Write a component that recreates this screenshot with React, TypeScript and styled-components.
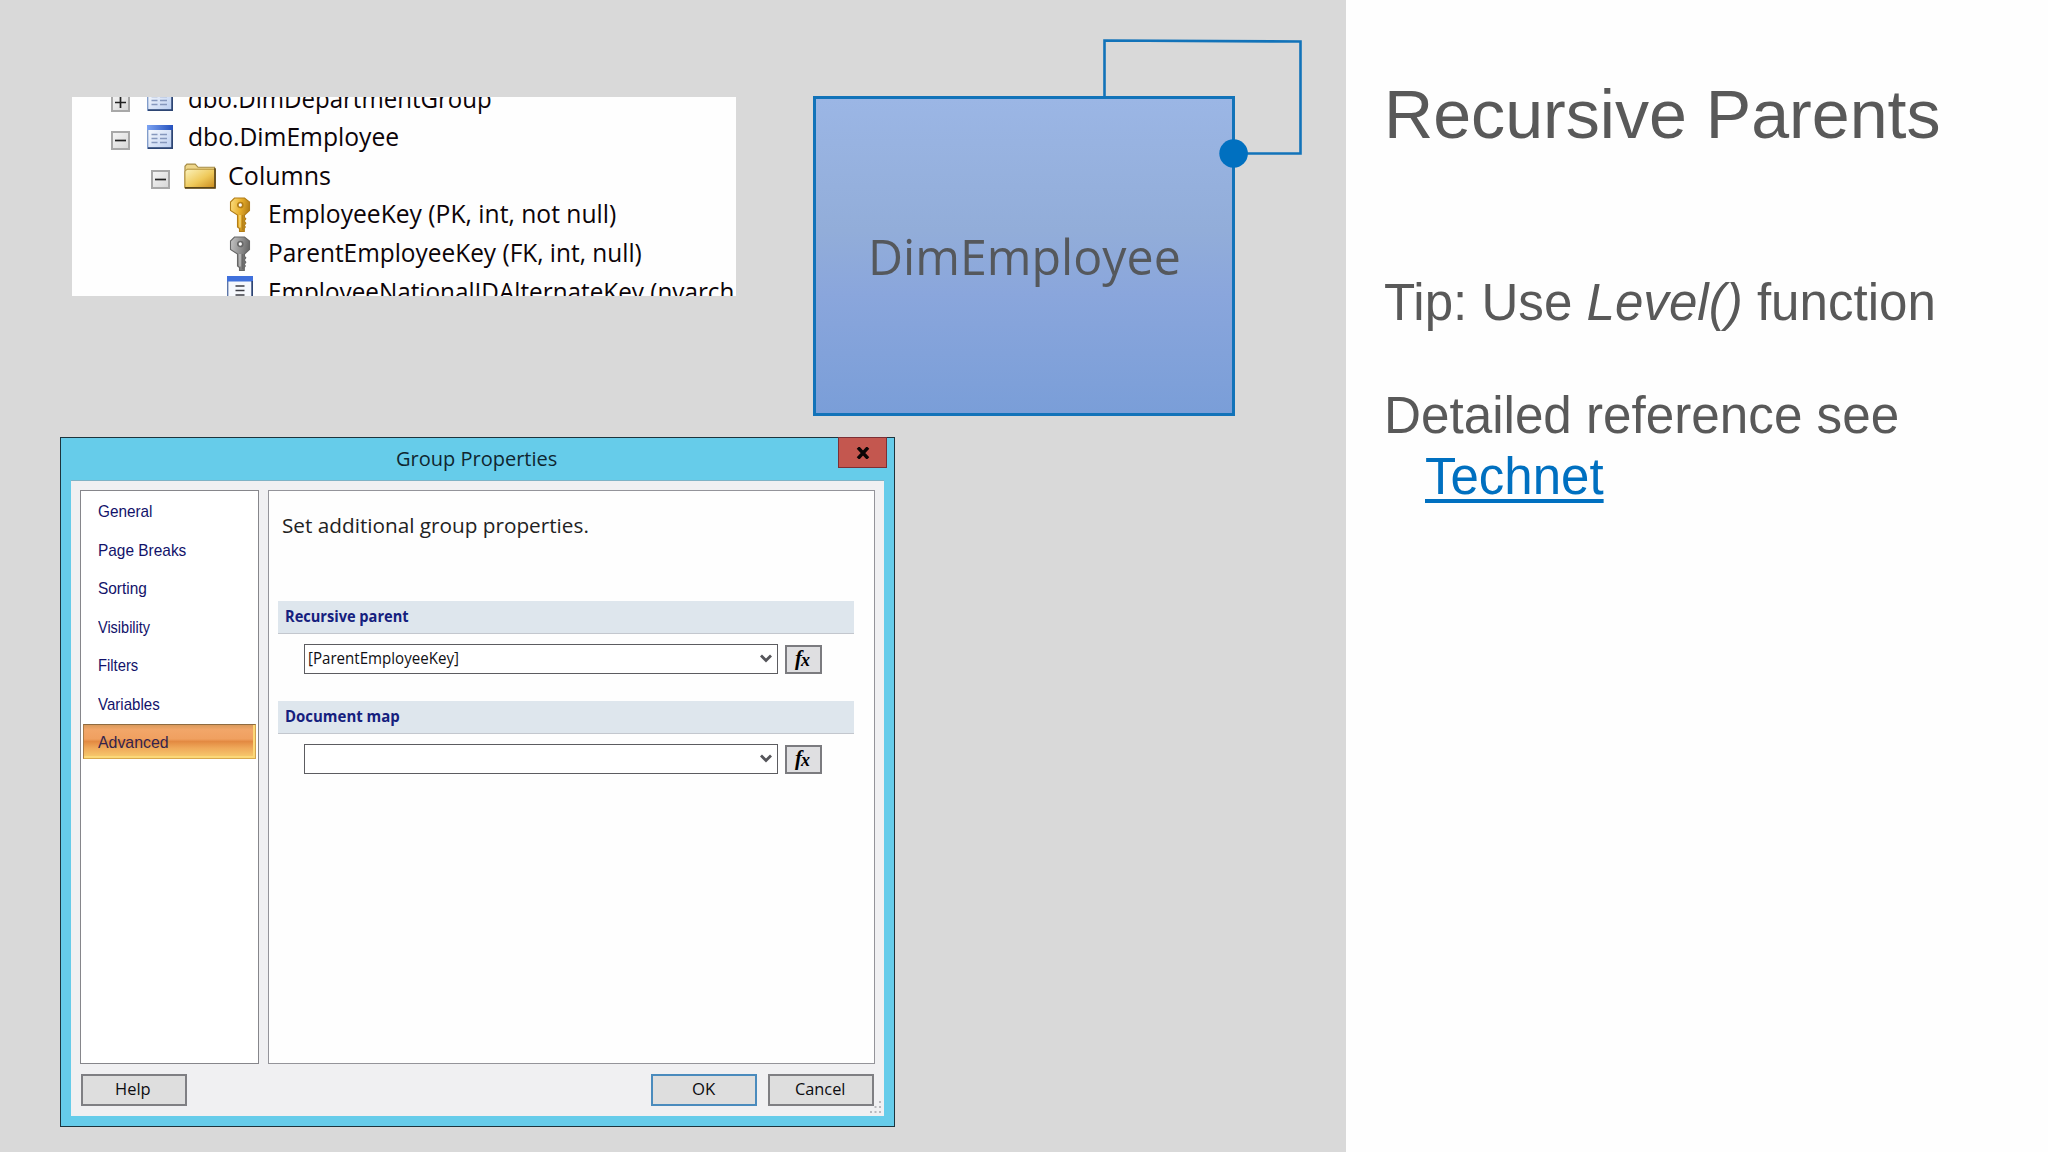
import React, { useLayoutEffect, useRef, useState } from "react";
import styled, { createGlobalStyle } from "styled-components";

const UI_FONT = '"Open Sans", "Noto Sans", sans-serif';
const ARIAL = '"Liberation Sans", Arial, sans-serif';

const GlobalStyle = createGlobalStyle`
  *, *::before, *::after { box-sizing: border-box; }
  html, body { margin: 0; padding: 0; }
  body { width: 2048px; height: 1152px; overflow: hidden; }
`;

/* ---------- text fitted to a fixed measure ---------- */

const FitBox = styled.span<{ $width: number }>`
  display: block;
  flex: none;
  width: ${(p) => p.$width}px;
  white-space: pre;
`;

const FitInner = styled.span`
  display: inline-block;
  transform-origin: 0 50%;
`;

function Fit({ width, children }: { width: number; children: React.ReactNode }) {
  const ref = useRef<HTMLSpanElement>(null);
  const [scale, setScale] = useState(1);
  useLayoutEffect(() => {
    if (ref.current) setScale(width / ref.current.offsetWidth);
  }, [width]);
  return (
    <FitBox $width={width}>
      <FitInner ref={ref} style={{ transform: `scaleX(${scale})` }}>
        {children}
      </FitInner>
    </FitBox>
  );
}

/* ---------- slide ---------- */

const Slide = styled.div`
  display: flex;
  width: 2048px;
  height: 1152px;
  background: #fefefe;
`;

const Stage = styled.main`
  flex: none;
  width: 1346px;
  height: 1152px;
  background: #d9d9d9;
  display: flex;
  flex-direction: column;
`;

const Upper = styled.div`
  display: flex;
  align-items: flex-start;
  height: 437px;
  padding: 96px 0 0 72px;
  gap: 77px;
`;

const Notes = styled.aside`
  flex: 1;
  padding: 75px 0 0 38px;
  font-family: ${ARIAL};
  color: #595959;
`;

const Title = styled.h1`
  margin: 0;
  font-size: 68px;
  line-height: 78px;
  font-weight: 400;
`;

const Note = styled.div<{ $top: number }>`
  margin-top: ${(p) => p.$top}px;
  font-size: 51px;
  line-height: 61.6px;
`;

const NoteLink = styled.a`
  display: block;
  width: max-content;
  margin-left: 41px;
  color: #0070c0;
  text-decoration: underline;
  text-decoration-thickness: 4px;
  text-underline-offset: 5px;
  text-decoration-skip-ink: none;
`;

/* ---------- object tree ---------- */

const TreePanel = styled.section`
  flex: none;
  width: 664px;
  height: 199px;
  margin-top: 1px;
  overflow: hidden;
  background: #fefefe;
  font: 25px/38.67px ${UI_FONT};
  color: #0c0408;
`;

const TreeList = styled.div`
  margin-top: -18.5px;
`;

const TreeRow = styled.div<{ $level: number }>`
  display: flex;
  align-items: center;
  height: 38.67px;
  padding-left: ${(p) => 39 + p.$level * 40.3}px;
`;

const ExpanderSlot = styled.span`
  flex: none;
  width: 19px;
  height: 19px;
  margin: 9px 13.5px 0 0;
`;

const Expander = styled.span`
  display: flex;
  align-items: center;
  justify-content: center;
  width: 19px;
  height: 19px;
  border: 2px solid #a8a8a8;
  background: linear-gradient(135deg, #f4f4f4, #d8d8d8);
`;

const IconSlot = styled.span<{ $raise: number }>`
  flex: none;
  display: flex;
  justify-content: center;
  width: 32px;
  margin: ${(p) => 2 - p.$raise}px 12.3px 0 0;
`;

const TableIcon = () => (
  <svg width="26" height="24" viewBox="0 0 26 24">
    <defs>
      <linearGradient id="tb" x1="0" y1="0" x2="1" y2="1">
        <stop offset="0" stopColor="#fff" />
        <stop offset="1" stopColor="#b9cdf0" />
      </linearGradient>
      <linearGradient id="th" x1="0" y1="0" x2="1" y2="0">
        <stop offset="0" stopColor="#7da4f2" />
        <stop offset="1" stopColor="#2450bd" />
      </linearGradient>
    </defs>
    <rect x="0.7" y="0.7" width="24.6" height="22.6" fill="url(#tb)" stroke="#7c98c8" strokeWidth="1.3" />
    <rect x="0" y="0" width="26" height="5" fill="url(#th)" />
    <path d="M25.2 5v18.2H1" fill="none" stroke="#2d4573" strokeWidth="1.8" />
    <path d="M4.5 9.5h6M13 9.5h7M4.5 13.5h6M13 13.5h7M4.5 17.5h6M13 17.5h7" stroke="#8698bd" strokeWidth="1.6" />
  </svg>
);

const ColumnIcon = () => (
  <svg width="26" height="28" viewBox="0 0 26 28">
    <rect x="0.7" y="0.7" width="24.6" height="26.6" fill="#f6f8fd" stroke="#5d76a8" strokeWidth="1.4" />
    <rect width="26" height="5.5" fill="#3f70dc" />
    <path d="M25.2 5v22.3" stroke="#2d4573" strokeWidth="1.6" />
    <path d="M8.5 10h9M8.5 14.5h9M8.5 19h9M8.5 23.5h9" stroke="#3c3c44" strokeWidth="1.6" />
  </svg>
);

const FolderIcon = () => (
  <svg width="33" height="26" viewBox="0 0 33 26">
    <defs>
      <linearGradient id="fo" x1="0" y1="0" x2="1" y2="1">
        <stop offset="0" stopColor="#fbf3bd" />
        <stop offset="0.55" stopColor="#efc95a" />
        <stop offset="1" stopColor="#c98a1c" />
      </linearGradient>
    </defs>
    <path d="M1 25V3l2-2.3h8.5l3 3.3h17v21z" fill="#eed68a" stroke="#a58b45" strokeWidth="1.2" />
    <path d="M1 25V8.5L3 6h29v19z" fill="url(#fo)" stroke="#b08d35" strokeWidth="1" />
    <path d="M32 5v20.200H1" fill="none" stroke="#5a4417" strokeWidth="1.7" />
  </svg>
);

const KeyIcon = ({ light, mid, dark }: { light: string; mid: string; dark: string }) => (
  <svg width="22" height="35" viewBox="0 0 22 35">
    <defs>
      <linearGradient id={`k${mid.slice(1)}`} x1="0" y1="0" x2="1" y2="0.3">
        <stop offset="0" stopColor={light} />
        <stop offset="0.55" stopColor={mid} />
        <stop offset="1" stopColor={dark} />
      </linearGradient>
    </defs>
    <path
      d="M5.500 1h10L20.500 5v8.500L15.500 18v2.300l1.300 1.500-1.500 2.200 1.500 2.200-1.500 2.300 1 1.500-1 1.500v3H10.500V31.500L8.500 30V18L1.500 13.500V5z"
      fill={`url(#k${mid.slice(1)})`}
      stroke={dark}
      strokeWidth="1.1"
    />
    <circle cx="11.3" cy="8" r="2.5" fill="#fff" stroke={dark} strokeWidth="1.7" />
    <path d="M11 18v12.500" stroke={light} strokeWidth="1.3" />
    <path d="M13.800 18v15" stroke={dark} strokeWidth="1.2" />
  </svg>
);

const icons = {
  table: <TableIcon />,
  folder: <FolderIcon />,
  primary: <KeyIcon light="#fbdf85" mid="#e9b02c" dark="#b27d17" />,
  foreign: <KeyIcon light="#c6c6c6" mid="#939393" dark="#666666" />,
  column: <ColumnIcon />,
};

type TreeItem = {
  level: number;
  toggle?: "plus" | "minus";
  icon: keyof typeof icons;
  label: string;
  width: number;
};

const treeItems: TreeItem[] = [
  { level: 0, toggle: "plus", icon: "table", label: "dbo.DimDepartmentGroup", width: 304 },
  { level: 0, toggle: "minus", icon: "table", label: "dbo.DimEmployee", width: 211 },
  { level: 1, toggle: "minus", icon: "folder", label: "Columns", width: 103 },
  { level: 2, icon: "primary", label: "EmployeeKey (PK, int, not null)", width: 348 },
  { level: 2, icon: "foreign", label: "ParentEmployeeKey (FK, int, null)", width: 374 },
  { level: 2, icon: "column", label: "EmployeeNationalIDAlternateKey (nvarch", width: 466 },
];

/* ---------- entity diagram ---------- */

const Entity = styled.section`
  position: relative;
  flex: none;
  display: flex;
  align-items: center;
  justify-content: center;
  width: 422px;
  height: 320px;
  border: 3px solid #1273b9;
  background: linear-gradient(180deg, #9bb6e5 0%, #92add9 42%, #8aa6dc 62%, #7a9ed8 100%);
  font: 50px/68px ${UI_FONT};
  color: #55585c;
`;

const SelfJoin = styled.svg`
  position: absolute;
  left: 284px;
  top: -63px;
`;

/* ---------- dialog ---------- */

const Dialog = styled.section`
  display: flex;
  flex-direction: column;
  width: 835px;
  height: 690px;
  margin-left: 60px;
  border: 1px solid #1d343d;
  background: #66ccea;
  padding: 0 10px 10px 10px;
  font-family: ${UI_FONT};
  color: #101014;
`;

const TitleBar = styled.header`
  display: flex;
  flex: none;
  height: 42px;
  padding-left: 325px;
  font-size: 20.5px;
  line-height: 41px;
  color: #0f2630;
`;

const CloseButton = styled.button`
  display: flex;
  align-items: center;
  justify-content: center;
  width: 49px;
  height: 31px;
  margin: -1px -3px 0 auto;
  padding: 0;
  border: 1px solid #7c2f35;
  background: #c4574f;
`;

const DialogBody = styled.div`
  display: flex;
  flex-direction: column;
  flex: 1;
  padding: 9px 9px 10px 8.5px;
  border-top: 1px solid #7fb3c6;
  background: #f0f0f2;
`;

const Panes = styled.div`
  display: flex;
  gap: 9px;
  height: 574px;
`;

const Nav = styled.nav`
  flex: none;
  width: 179.5px;
  padding: 2px 2px 0 2px;
  border: 1px solid #86868b;
  background: #fff;
  font: 17px/35px ${ARIAL};
  color: #12126a;
`;

const NavItem = styled.div<{ $active?: boolean }>`
  height: 35px;
  margin-bottom: 3.5px;
  padding-left: 14px;
  line-height: 36px;
  border: 1px solid transparent;
  ${(p) =>
    p.$active &&
    `
    color: #35244c;
    border-color: #8f6b40 #d3a24f #d8a94c #a87a48;
    background: linear-gradient(180deg, #d99a5c 0%, #f2a669 14%, #f0a060 42%, #e38a42 50%, #efa95a 70%, #f8cd6e 100%);
    box-shadow: inset -2px -2px 0 #fbd878;
  `}
`;

const Content = styled.div`
  flex: 1;
  padding: 23px 20px 0 9px;
  border: 1px solid #94949a;
  background: #fefefe;
`;

const Heading = styled.h2`
  height: 24px;
  margin: 0 0 63px 3.5px;
  font-size: 20.8px;
  font-weight: 400;
  line-height: 23px;
  color: #222;
`;

const SectionBar = styled.h3`
  height: 33px;
  margin: 0;
  padding-left: 7px;
  border-bottom: 1px solid #c3c7ce;
  background: #dee6ed;
  font-size: 16px;
  font-weight: 700;
  line-height: 31px;
  color: #15207e;
`;

const Field = styled.div<{ $after: number }>`
  display: flex;
  align-items: flex-end;
  gap: 7px;
  margin: 10px 0 ${(p) => p.$after}px 26px;
`;

const Combo = styled.div`
  display: flex;
  align-items: center;
  justify-content: space-between;
  width: 474px;
  height: 30px;
  padding: 0 5px 0 3px;
  border: 1px solid #5c5c60;
  background: #fff;
  font-size: 15.8px;
  line-height: 26px;
`;

const ComboText = styled.div`
  padding-bottom: 2px;
`;

const FxButton = styled.button`
  display: flex;
  justify-content: center;
  align-items: center;
  width: 37px;
  height: 29px;
  padding: 0 2px 3px 0;
  border: 2px solid #7b7b7f;
  background: #dfdfe1;
  font: italic 700 21px/24px "Liberation Serif", serif;
  color: #000;

  small {
    margin-left: -1px;
    padding-top: 4px;
    font-size: 18px;
  }
`;

const Footer = styled.footer`
  display: flex;
  gap: 11px;
  margin: 10px 1px 0;
`;

const PushButton = styled.button<{ $primary?: boolean }>`
  display: flex;
  align-items: center;
  justify-content: center;
  width: 106px;
  height: 32px;
  padding: 0 2px 1px 0;
  border: 2px solid ${(p) => (p.$primary ? "#4a8bbd" : "#7f7f83")};
  background: #dedede;
  font: 16px/27px ${UI_FONT};
  color: #0c0c10;

  &:first-child {
    margin-right: auto;
  }
`;

const Grip = styled.svg`
  position: absolute;
  left: 869px;
  top: 1101px;
`;

const Chevron = () => (
  <svg width="12" height="10" viewBox="0 0 12 10">
    <path d="M1 1.500l5 5 5-5" fill="none" stroke="#55555a" strokeWidth="2.8" />
  </svg>
);

const navItems: [string, number][] = [
  ["General", 54],
  ["Page Breaks", 88],
  ["Sorting", 49],
  ["Visibility", 52],
  ["Filters", 40],
  ["Variables", 62],
  ["Advanced", 71],
];

function ExpressionField({ value, after = 0 }: { value?: string; after?: number }) {
  return (
    <Field $after={after}>
      <Combo>
        <ComboText>{value && <Fit width={151}>{value}</Fit>}</ComboText>
        <Chevron />
      </Combo>
      <FxButton>
        f<small>x</small>
      </FxButton>
    </Field>
  );
}

export default function App() {
  return (
    <Slide>
      <GlobalStyle />
      <Stage>
        <Upper>
          <TreePanel>
            <TreeList>
              {treeItems.map((item) => (
                <TreeRow key={item.label} $level={item.level}>
                  <ExpanderSlot>
                    {item.toggle && (
                      <Expander>
                        <svg width="11" height="11" viewBox="0 0 11 11">
                          <path
                            d={item.toggle === "plus" ? "M0 5.500h11M5.500 0v11" : "M0 5.500h11"}
                            stroke="#222"
                            strokeWidth="1.7"
                          />
                        </svg>
                      </Expander>
                    )}
                  </ExpanderSlot>
                  <IconSlot $raise={item.icon === "column" ? 4 : 0}>{icons[item.icon]}</IconSlot>
                  <Fit width={item.width}>{item.label}</Fit>
                </TreeRow>
              ))}
            </TreeList>
          </TreePanel>
          <Entity>
            <Fit width={313}>DimEmployee</Fit>
            <SelfJoin width="210" height="140" viewBox="1100 36 210 140">
              <path d="M1104.500 96V40.500L1300.500 41.500V153.500H1234" fill="none" stroke="#1273b9" strokeWidth="2.6" />
              <circle cx="1233.600" cy="153.500" r="14.300" fill="#0070c0" />
            </SelfJoin>
          </Entity>
        </Upper>
        <Dialog>
          <TitleBar>
            <Fit width={161}>Group Properties</Fit>
            <CloseButton aria-label="Close">
              <svg width="14" height="12" viewBox="0 0 14 12">
                <path d="M2 0.500l10 11M12 0.500l-10 11" stroke="#0c0606" strokeWidth="3.4" />
              </svg>
            </CloseButton>
          </TitleBar>
          <DialogBody>
            <Panes>
              <Nav>
                {navItems.map(([label, width]) => (
                  <NavItem key={label} $active={label === "Advanced"}>
                    <Fit width={width}>{label}</Fit>
                  </NavItem>
                ))}
              </Nav>
              <Content>
                <Heading>
                  <Fit width={307}>Set additional group properties.</Fit>
                </Heading>
                <SectionBar>
                  <Fit width={124}>Recursive parent</Fit>
                </SectionBar>
                <ExpressionField value="[ParentEmployeeKey]" after={27} />
                <SectionBar>
                  <Fit width={115}>Document map</Fit>
                </SectionBar>
                <ExpressionField />
              </Content>
            </Panes>
            <Footer>
              <PushButton>
                <Fit width={36}>Help</Fit>
              </PushButton>
              <PushButton $primary>
                <Fit width={23}>OK</Fit>
              </PushButton>
              <PushButton>
                <Fit width={50}>Cancel</Fit>
              </PushButton>
            </Footer>
          </DialogBody>
        </Dialog>
        <Grip width="14" height="14" viewBox="0 0 14 14" fill="#b9b9bd">
          <path d="M10 0h2v2h-2zM10 5h2v2h-2zM5.500 5h2v2h-2zM10 10h2v2h-2zM5.500 10h2v2h-2zM1 10h2v2h-2z" />
        </Grip>
      </Stage>
      <Notes>
        <Title>
          <Fit width={557}>Recursive Parents</Fit>
        </Title>
        <Note $top={119}>
          <Fit width={552}>
            Tip: Use <em>Level()</em> function
          </Fit>
        </Note>
        <Note $top={51}>
          <Fit width={515}>Detailed reference see</Fit>
          <NoteLink>Technet</NoteLink>
        </Note>
      </Notes>
    </Slide>
  );
}
